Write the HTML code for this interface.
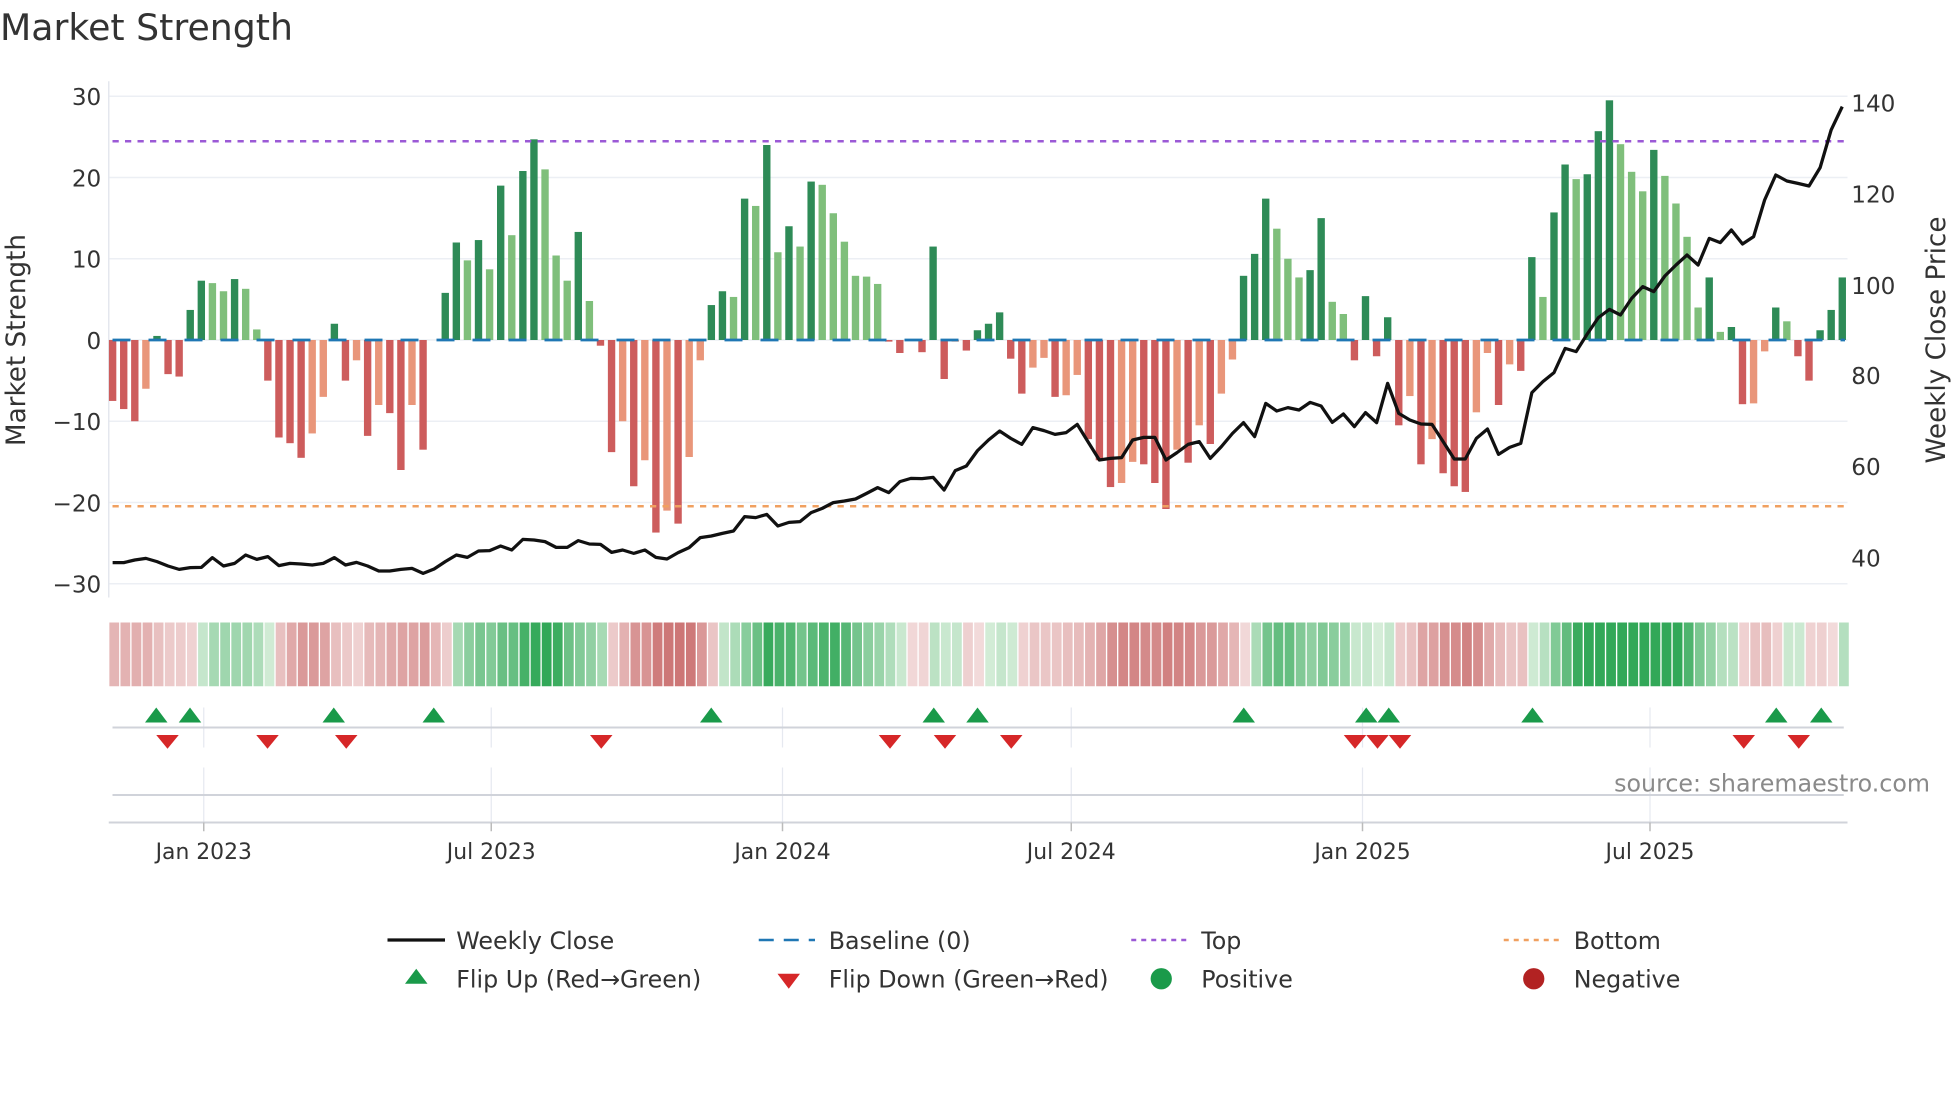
<!DOCTYPE html>
<html><head><meta charset="utf-8"><style>
html,body{margin:0;padding:0;background:#fff;width:1960px;height:1102px;overflow:hidden}
svg{display:block;font-family:"DejaVu Sans","Liberation Sans",sans-serif}
</style></head><body>
<svg id="s" width="1960" height="1102" viewBox="0 0 1568 881.6" xmlns="http://www.w3.org/2000/svg">
<rect width="1568" height="882" fill="#fff"/>
<text x="0" y="32" font-size="29" fill="#333">Market Strength</text>
<g id="grid" stroke="#eceff4" stroke-width="1.2"></g>
<line x1="87" y1="65" x2="87" y2="478" stroke="#e4e7ee" stroke-width="1.2"/>
<g font-size="18.5" fill="#333" text-anchor="end">
<text x="81" y="84">30</text><text x="81" y="149">20</text><text x="81" y="214">10</text><text x="81" y="279">0</text>
<text x="81" y="344">−10</text><text x="81" y="409">−20</text><text x="81" y="474">−30</text>
</g>
<g font-size="18.5" fill="#333">
<text x="1481" y="89">140</text><text x="1481" y="162">120</text><text x="1481" y="235">100</text>
<text x="1481" y="307">80</text><text x="1481" y="380">60</text><text x="1481" y="453">40</text>
</g>
<text transform="translate(20,272) rotate(-90)" text-anchor="middle" font-size="21" fill="#333">Market Strength</text>
<text transform="translate(1556,272) rotate(-90)" text-anchor="middle" font-size="21" fill="#333">Weekly Close Price</text>
<g id="bars"></g>
<line x1="90" y1="272" x2="1476" y2="272" stroke="#1f77b4" stroke-width="2.2" stroke-dasharray="14.4 14.4"/>
<line x1="90" y1="113" x2="1476" y2="113" stroke="#9b59d6" stroke-width="2" stroke-dasharray="5 5"/>
<line x1="90" y1="405" x2="1476" y2="405" stroke="#f0a060" stroke-width="2" stroke-dasharray="5 5"/>
<polyline id="price" fill="none" stroke="#111" stroke-width="2.6" stroke-linejoin="round"/>
<g id="heat"></g>
<g stroke="#e6e9f0" stroke-width="1">
<line x1="163" y1="566" x2="163" y2="598"/><line x1="393" y1="566" x2="393" y2="598"/><line x1="626" y1="566" x2="626" y2="598"/><line x1="857" y1="566" x2="857" y2="598"/><line x1="1090" y1="566" x2="1090" y2="598"/><line x1="1320" y1="566" x2="1320" y2="598"/>
<line x1="163" y1="614" x2="163" y2="658"/><line x1="393" y1="614" x2="393" y2="658"/><line x1="626" y1="614" x2="626" y2="658"/><line x1="857" y1="614" x2="857" y2="658"/><line x1="1090" y1="614" x2="1090" y2="658"/><line x1="1320" y1="614" x2="1320" y2="658"/>
</g>
<line x1="90" y1="582" x2="1475" y2="582" stroke="#d0d3da" stroke-width="1.6"/>
<line x1="90" y1="636" x2="1475" y2="636" stroke="#d0d3da" stroke-width="1.6"/>
<line x1="87" y1="658" x2="1478" y2="658" stroke="#d0d3da" stroke-width="1.6"/>
<g stroke="#bbb" stroke-width="1.2">
<line x1="163" y1="658" x2="163" y2="665"/><line x1="393" y1="658" x2="393" y2="665"/><line x1="626" y1="658" x2="626" y2="665"/><line x1="857" y1="658" x2="857" y2="665"/><line x1="1090" y1="658" x2="1090" y2="665"/><line x1="1320" y1="658" x2="1320" y2="665"/>
</g>
<g id="tri"></g>
<text x="1544" y="633" text-anchor="end" font-size="19" fill="#8a8a8a">source: sharemaestro.com</text>
<g font-size="17.5" fill="#333" text-anchor="middle">
<text x="163" y="687">Jan 2023</text><text x="393" y="687">Jul 2023</text><text x="626" y="687">Jan 2024</text>
<text x="857" y="687">Jul 2024</text><text x="1090" y="687">Jan 2025</text><text x="1320" y="687">Jul 2025</text>
</g>
<g font-size="19" fill="#333">
<line x1="310" y1="752" x2="356" y2="752" stroke="#111" stroke-width="2.6"/>
<text x="365" y="759">Weekly Close</text>
<line x1="607" y1="752" x2="652" y2="752" stroke="#1f77b4" stroke-width="2" stroke-dasharray="12 8"/>
<text x="663" y="759">Baseline (0)</text>
<line x1="905" y1="752" x2="950" y2="752" stroke="#9b59d6" stroke-width="2" stroke-dasharray="4 4"/>
<text x="961" y="759">Top</text>
<line x1="1203" y1="752" x2="1248" y2="752" stroke="#f0a060" stroke-width="2" stroke-dasharray="4 4"/>
<text x="1259" y="759">Bottom</text>
<polygon points="324,787 342,787 333,775" fill="#1a9a4a"/>
<text x="365" y="790">Flip Up (Red→Green)</text>
<polygon points="622,779 640,779 631,791" fill="#d62728"/>
<text x="663" y="790">Flip Down (Green→Red)</text>
<circle cx="929" cy="783" r="8.5" fill="#1a9a4a"/>
<text x="961" y="790">Positive</text>
<circle cx="1227" cy="783" r="8.5" fill="#b22222"/>
<text x="1259" y="790">Negative</text>
</g>
</svg>
<script>
var NS="http://www.w3.org/2000/svg";
function el(t,a,p){var e=document.createElementNS(NS,t);for(var k in a)e.setAttribute(k,a[k]);p.appendChild(e);return e;}
var grid=document.getElementById('grid');
[77,142,207,272,337,402,467].forEach(function(y){el('line',{x1:87,y1:y,x2:1478,y2:y},grid);});
var V="-7.5R,-8.5R,-10R,-6O,0.5D,-4.2R,-4.5R,3.7D,7.3D,7L,6L,7.5D,6.3L,1.3L,-5R,-12R,-12.7R,-14.5R,-11.5O,-7O,2D,-5R,-2.5O,-11.8R,-8O,-9R,-16R,-8O,-13.5R,0D,5.8D,12D,9.8L,12.3D,8.7L,19D,12.9L,20.8D,24.7D,21L,10.4L,7.3L,13.3D,4.8L,-0.7R,-13.8R,-10O,-18R,-14.8O,-23.7R,-21O,-22.6R,-14.4O,-2.5O,4.3D,6D,5.3L,17.4D,16.5L,24D,10.8L,14D,11.5L,19.5D,19.1L,15.6L,12.1L,7.9L,7.8L,6.9L,-0.2R,-1.6R,0R,-1.5R,11.5D,-4.8R,-0.2O,-1.3R,1.2D,2D,3.4D,-2.3R,-6.6R,-3.4O,-2.2O,-7R,-6.8O,-4.3O,-12.2R,-14.8R,-18.1R,-17.6O,-15O,-15.3R,-17.6R,-20.8R,-13.5O,-15.1R,-10.5O,-12.8R,-6.6O,-2.4O,7.9D,10.6D,17.4D,13.7L,10L,7.7L,8.6D,15D,4.7L,3.2L,-2.5R,5.4D,-2R,2.8D,-10.5R,-6.9O,-15.3R,-12.2O,-16.4R,-18R,-18.7R,-8.9O,-1.6O,-8R,-3O,-3.8R,10.2D,5.3L,15.7D,21.6D,19.8L,20.4D,25.7D,29.5D,24.1L,20.7L,18.3L,23.4D,20.2L,16.8L,12.7L,4L,7.7D,1L,1.6D,-7.9R,-7.8O,-1.4O,4D,2.3L,-2R,-5R,1.2D,3.7D,7.7D".split(',');
var col={D:'#2e8b57',L:'#7fbf7b',R:'#cd5c5c',O:'#e9967a'};
var bars=document.getElementById('bars'),heat=document.getElementById('heat');
var vals=[];
V.forEach(function(s,i){var v=parseFloat(s),c=s.slice(-1);vals.push(v);
 var x=90.1+i*8.87;var y0=272,y1=272-v*6.5;
 if(Math.abs(v)>0.05)el('rect',{x:x-2.95,y:Math.min(y0,y1),width:5.9,height:Math.abs(y1-y0),fill:col[c]},bars);});
vals.forEach(function(v,i){var a=0,n=0;for(var j=Math.max(0,i-2);j<=i;j++){a+=vals[j];n++;}a/=n;
 var t=Math.min(1,Math.abs(a)/20);var x=87+i*8.87;var f;
 if(a>=0){f='rgb('+Math.round(215-165*t)+','+Math.round(238-70*t)+','+Math.round(218-130*t)+')';}
 else{f='rgb('+Math.round(242-37*t)+','+Math.round(218-100*t)+','+Math.round(218-100*t)+')';}
 el('rect',{x:x+0.5,y:498,width:7.8,height:51,fill:f},heat);});
var Z=[[100,[1448,1448,1440,1435,1445,1458,1468,1463,1462,1433,1458,1450,1425,1438,1430,1457,1450,1452,1455,1450,1433,1455,1447,1458,1473,1473,1468,1465,1480,1467,1445,1425,1432,1413,1412,1398,1410,1378,1380]],
[540,[1385,1402,1402,1382,1392,1393,1417,1410,1420,1410,1432,1437,1418,1403,1373,1368,1360,1353,1310,1313,1303,1338,1327,1325,1298,1285,1268,1263,1257,1240,1223,1238,1205,1195,1196,1192,1230,1172,1158,1112,1080,1053]],
[980,[1075,1093,1043,1052,1063,1058,1033,1087,1140,1135,1133,1080,1072,1072,1140,1118,1093,1085,1135,1100,1060,1028,1070,970,993,983,990,967,978,1027,1002,1040,998,1028,910,1000,1020,1032]],
[1420,[1033,1085,1137,1137,1075,1047,1123,1102,1090,938,905,878,805,815,762,713,688,705,655,620,635,588,555,525,555,475,488,450,492,470,360,285,303,310,318,263,150,80]]];
var pts=[];Z.forEach(function(z){z[1].forEach(function(zy){var i=pts.length;pts.push((90.1+i*8.87).toFixed(1)+','+(64+zy/3.75).toFixed(1));});});
document.getElementById('price').setAttribute('points',pts.join(' '));
var tri=document.getElementById('tri');
[125,152,267,347,569,747,782,995,1093,1111,1226,1421,1457].forEach(function(x){el('polygon',{points:(x-9)+',578 '+(x+9)+',578 '+x+',566',fill:'#1a9a4a'},tri);});
[134,214,277,481,712,756,809,1084,1102,1120,1395,1439].forEach(function(x){el('polygon',{points:(x-9)+',588 '+(x+9)+',588 '+x+',599',fill:'#d62728'},tri);});
</script>
</body></html>
